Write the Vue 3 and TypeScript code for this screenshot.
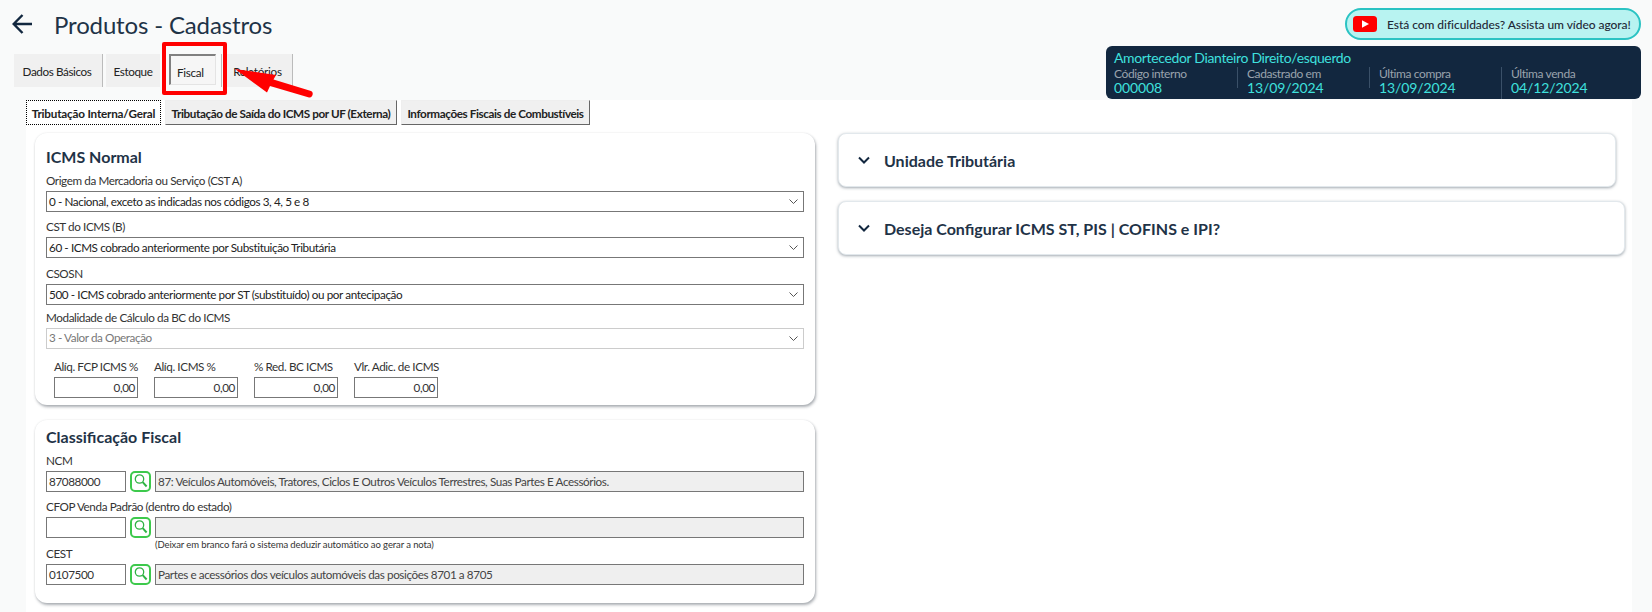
<script setup lang="ts">
const topTabs = [
  { label: 'Dados Básicos', active: false },
  { label: 'Estoque', active: false },
  { label: 'Fiscal', active: true },
  { label: 'Relatórios', active: false },
]
const subTabs = ['Tributação Interna/Geral', 'Tributação de Saída do ICMS por UF (Externa)', 'Informações Fiscais de Combustíveis']
const stats = [
  { label: 'Código interno', value: '000008' },
  { label: 'Cadastrado em', value: '13/09/2024' },
  { label: 'Última compra', value: '13/09/2024' },
  { label: 'Última venda', value: '04/12/2024' },
]
const selects = [
  { label: 'Origem da Mercadoria ou Serviço (CST A)', value: '0 - Nacional, exceto as indicadas nos códigos 3, 4, 5 e 8', disabled: false },
  { label: 'CST do ICMS (B)', value: '60 - ICMS cobrado anteriormente por Substituição Tributária', disabled: false },
  { label: 'CSOSN', value: '500 - ICMS cobrado anteriormente por ST (substituído) ou por antecipação', disabled: false },
  { label: 'Modalidade de Cálculo da BC do ICMS', value: '3 - Valor da Operação', disabled: true },
]
const rates = ['Alíq. FCP ICMS %', 'Alíq. ICMS %', '% Red. BC ICMS', 'Vlr. Adic. de ICMS']
const fiscal = [
  { label: 'NCM', code: '87088000', desc: '87: Veículos Automóveis, Tratores, Ciclos E Outros Veículos Terrestres, Suas Partes E Acessórios.', hint: '' },
  { label: 'CFOP Venda Padrão (dentro do estado)', code: '', desc: '', hint: '(Deixar em branco fará o sistema deduzir automático ao gerar a nota)' },
  { label: 'CEST', code: '0107500', desc: 'Partes e acessórios dos veículos automóveis das posições 8701 a 8705', hint: '' },
]
</script>

<template>
  <div class="page">
    <header class="top">
      <div class="top-left">
        <div class="title-row">
          <svg class="back" width="20" height="20" viewBox="0 0 20 20" fill="none" stroke="#12273f" stroke-width="2.4">
            <path d="M20 10H2M10.5 1 1.7 10l8.8 9" />
          </svg>
          <h1>Produtos - Cadastros</h1>
        </div>
        <nav class="tabs">
          <div v-for="t in topTabs" :key="t.label" class="tab" :class="{ active: t.active }">
            <span>{{ t.label }}</span>
          </div>
          <div class="redbox"></div>
          <svg class="redarrow" width="80" height="34" viewBox="0 0 80 34">
            <path d="M1 3 42 9 39.5 13.5 77 25C80 26 79 32 75 31.5L36 20 33 26.5z" fill="#f00" />
          </svg>
        </nav>
      </div>
      <div class="top-right">
        <div class="pill">
          <svg class="yt" width="24" height="16" viewBox="0 0 24 16">
            <rect width="24" height="16" rx="3.5" fill="#f00" />
            <path d="M9 4.2v7.6L16 8z" fill="#fff" />
          </svg>
          <span>Está com dificuldades? Assista um vídeo agora!</span>
        </div>
        <div class="summary">
          <div class="prod">Amortecedor Dianteiro Direito/esquerdo</div>
          <div class="stats">
            <div v-for="s in stats" :key="s.label" class="stat">
              <div class="stat-l">{{ s.label }}</div>
              <div class="stat-v">{{ s.value }}</div>
            </div>
          </div>
        </div>
      </div>
    </header>

    <main class="main">
      <div class="subtabs">
        <button v-for="(s, i) in subTabs" :key="s" class="subtab" :class="{ current: i === 0 }">{{ s }}</button>
      </div>
      <div class="cols">
        <div class="col-left">
          <section class="card icms">
            <h2>ICMS Normal</h2>
            <div v-for="s in selects" :key="s.label" class="field">
              <label>{{ s.label }}</label>
              <div class="select" :class="{ disabled: s.disabled }">
                <span>{{ s.value }}</span>
                <svg width="9" height="5" viewBox="0 0 9 5" fill="none" stroke="currentColor" stroke-width="1">
                  <path d="M.5.5l4 4 4-4" />
                </svg>
              </div>
            </div>
            <div class="rates">
              <div v-for="r in rates" :key="r" class="rate">
                <label>{{ r }}</label>
                <div class="box num">0,00</div>
              </div>
            </div>
          </section>
          <section class="card class-card">
            <h2>Classificação Fiscal</h2>
            <div v-for="f in fiscal" :key="f.label" class="cf">
              <label>{{ f.label }}</label>
              <div class="cf-row">
                <div class="box code">{{ f.code }}</div>
                <div class="search">
                  <svg width="15" height="15" viewBox="0 0 15 15" fill="none" stroke="#2fb344">
                    <circle cx="6.5" cy="5" r="4.2" stroke-width="1.3" />
                    <path d="M9.7 8.2l3.9 4.3" stroke-width="1.9" />
                  </svg>
                </div>
                <div class="box desc">{{ f.desc }}</div>
              </div>
              <div v-if="f.hint" class="hint">{{ f.hint }}</div>
            </div>
          </section>
        </div>
        <div class="col-right">
          <section class="acc acc1">
            <svg width="12" height="8" viewBox="0 0 12 8" fill="none" stroke="#12273f" stroke-width="2">
              <path d="M1 1.5l5 5 5-5" />
            </svg>
            <span>Unidade Tributária</span>
          </section>
          <section class="acc acc2">
            <svg width="12" height="8" viewBox="0 0 12 8" fill="none" stroke="#12273f" stroke-width="2">
              <path d="M1 1.5l5 5 5-5" />
            </svg>
            <span>Deseja Configurar ICMS ST, PIS | COFINS e IPI?</span>
          </section>
        </div>
      </div>
    </main>
  </div>
</template>

<style>
html, body { margin: 0; background: #f9fafa; }
</style>

<style scoped>
.page {
  width: 1652px;
  height: 612px;
  overflow: hidden;
  background: #f9fafa;
  font-family: Lato, "Liberation Sans", sans-serif;
  font-size: 11.7px;
  letter-spacing: -0.4px;
  color: #1f2937;
}
.top {
  height: 100px;
  display: flex;
  justify-content: space-between;
}
.top-left { display: flex; flex-direction: column; }
.title-row {
  height: 48px;
  margin-bottom: 6px;
  padding-left: 12px;
  display: flex;
  align-items: center;
  gap: 22px;
}
.back { flex: none; }
h1 {
  margin: 0;
  font-size: 24px;
  font-weight: 400;
  color: #1f3347;
  letter-spacing: -0.15px;
}
.tabs {
  position: relative;
  margin-left: 14px;
  display: flex;
  height: 33px;
}
.tab {
  background: #f0f0f0;
  display: flex;
  align-items: center;
  justify-content: center;
  height: 33px;
  box-sizing: border-box;
  border-right: 1px solid #bbb;
  color: #222;
  white-space: nowrap;
}
.tab:nth-child(1) { width: 89px; margin-right: 3px; padding-right: 2px; }
.tab:nth-child(2) { width: 54px; border-right: 0; }
.tab:nth-child(3) { width: 62px; margin-right: 3px; background: transparent; justify-content: flex-start; padding-left: 9px; }
.tab:nth-child(4) { width: 68px; letter-spacing: -0.25px; padding-right: 2px; }
.tab.active span {
  width: 47px;
  height: 31px;
  margin-bottom: 2px;
  box-sizing: border-box;
  border: 2px solid #808080;
  border-right: 1px solid #e4e4e4;
  border-bottom: 1px solid #e4e4e4;
  background: #f6f6f6;
  display: flex;
  align-items: center;
  padding: 4px 0 0 6px;
  letter-spacing: -0.3px;
}
.redbox {
  position: absolute;
  left: 148px;
  top: -12px;
  width: 65px;
  height: 53px;
  box-sizing: border-box;
  border: 4px solid #f00;
  border-radius: 2px;
}
.redarrow {
  position: absolute;
  left: 220px;
  top: 12px;
}
.top-right {
  padding-right: 11px;
  display: flex;
  flex-direction: column;
  align-items: flex-end;
}
.pill {
  margin-top: 8px;
  width: 296px;
  height: 32px;
  box-sizing: border-box;
  border: 2px solid #2bc3c3;
  border-radius: 16px;
  background: #b8f3f1;
  display: flex;
  align-items: center;
  padding-left: 6px;
  gap: 10px;
  color: #1f2937;
  font-size: 12px;
  font-weight: 500;
  letter-spacing: -0.05px;
  white-space: nowrap;
}
.yt { flex: none; }
.summary {
  margin-top: 6px;
  width: 535px;
  height: 53px;
  box-sizing: border-box;
  background: #12273f;
  border-radius: 6px;
  padding: 3px 8px 0;
  color: #3fe0de;
}
.prod { font-size: 14px; line-height: 18px; letter-spacing: -0.35px; }
.stats { display: flex; }
.stat {
  position: relative;
  width: 134px;
  box-sizing: border-box;
  padding-left: 10px;
}
.stat::before {
  content: "";
  position: absolute;
  left: 0;
  top: 0;
  width: 1px;
  height: 21px;
  background: #3a5068;
}
.stat:last-child::before { height: 32px; }
.stat:first-child { padding-left: 0; width: 125px; }
.stat:first-child::before { display: none; }
.stat-l { color: #9aa3ad; font-size: 12px; line-height: 14px; letter-spacing: -0.4px; }
.stat-v { font-size: 14px; line-height: 13px; letter-spacing: -0.1px; }
.main {
  margin-left: 26px;
  width: 1606px;
  height: 512px;
  background: #fff;
  overflow: hidden;
}
.subtabs { display: flex; gap: 4px; height: 25px; }
.subtab {
  padding: 0;
  height: 25px;
  box-sizing: border-box;
  border: 1px solid;
  border-color: #eee #666 #666 #eee;
  background: #f0f0f0;
  font: 700 11.7px Lato, "Liberation Sans", sans-serif;
  letter-spacing: -0.4px;
  color: #222;
  white-space: nowrap;
}
.subtab:nth-child(1) { width: 135px; background: #fff; outline: 1px dotted #000; outline-offset: -1px; border: 0; letter-spacing: -0.2px; }
.subtab:nth-child(2) { width: 232px; }
.subtab:nth-child(3) { width: 189px; }
.cols {
  display: flex;
  padding-top: 8px;
  gap: 23px;
}
.col-left {
  width: 789px;
  padding-left: 9px;
  box-sizing: border-box;
  display: flex;
  flex-direction: column;
  gap: 15px;
  flex: none;
}
.card {
  width: 780px;
  box-sizing: border-box;
  background: #fff;
  border-radius: 12px;
  box-shadow: 1px 2px 3px rgba(70, 80, 90, .45), 0 0 2px rgba(70, 80, 90, .12);
  padding: 0 11px;
}
.icms { height: 272px; padding-top: 14px; }
.class-card { height: 183px; padding-top: 7px; }
h2 {
  margin: 0;
  font-size: 16px;
  line-height: 20px;
  font-weight: 700;
  letter-spacing: 0;
  color: #1f3347;
}
.field { margin-top: 7px; }
.field:nth-of-type(1) { margin-top: 6px; }
.field:nth-of-type(3) { margin-top: 8px; }
.field:nth-of-type(4) { margin-top: 5px; }
label {
  display: block;
  line-height: 15px;
  margin-bottom: 3px;
  color: #333;
  white-space: nowrap;
}
.select {
  height: 21px;
  box-sizing: border-box;
  border: 1px solid #777;
  background: #fff;
  padding: 0 5px 1px 2px;
  display: flex;
  align-items: center;
  justify-content: space-between;
  color: #222;
}
.select.disabled { border-color: #ccc; color: #777; padding-bottom: 3px; }
.select svg { color: #555; margin-top: 1px; }
.select.disabled svg { margin-top: 3px; }
.rates {
  display: flex;
  gap: 16px;
  padding: 10px 8px 0;
}
.rate { width: 84px; }
.box {
  height: 21px;
  box-sizing: border-box;
  border: 1px solid #777;
  display: flex;
  align-items: center;
  padding: 0 2px 1px;
  color: #333;
  white-space: nowrap;
}
.num { justify-content: flex-end; }
.cf { margin-top: 7px; }
.cf:nth-of-type(1) { margin-top: 6px; }
.cf-row { display: flex; gap: 4px; }
.code { width: 80px; flex: none; }
.desc { flex: 1; background: #efefef; color: #444; }
.search {
  width: 21px;
  height: 21px;
  flex: none;
  box-sizing: border-box;
  border: 2px solid #3dc94c;
  border-radius: 5px;
  display: flex;
  align-items: center;
  justify-content: center;
}
.hint {
  font-size: 9.5px;
  line-height: 11px;
  letter-spacing: -0.1px;
  margin: 1px 0 -11px 109px;
  color: #333;
}
.col-right {
  display: flex;
  flex-direction: column;
  gap: 14px;
  flex: none;
}
.acc {
  height: 54px;
  box-sizing: border-box;
  background: #fff;
  border-radius: 8px;
  border: 1px solid #e2e8ec;
  box-shadow: 0 1px 3px rgba(70, 85, 100, .5);
  display: flex;
  align-items: center;
  padding-left: 19px;
  gap: 14px;
  font-size: 16px;
  font-weight: 700;
  letter-spacing: 0;
  color: #1f3347;
}
.acc1 { width: 778px; }
.acc2 { width: 787px; }
</style>
